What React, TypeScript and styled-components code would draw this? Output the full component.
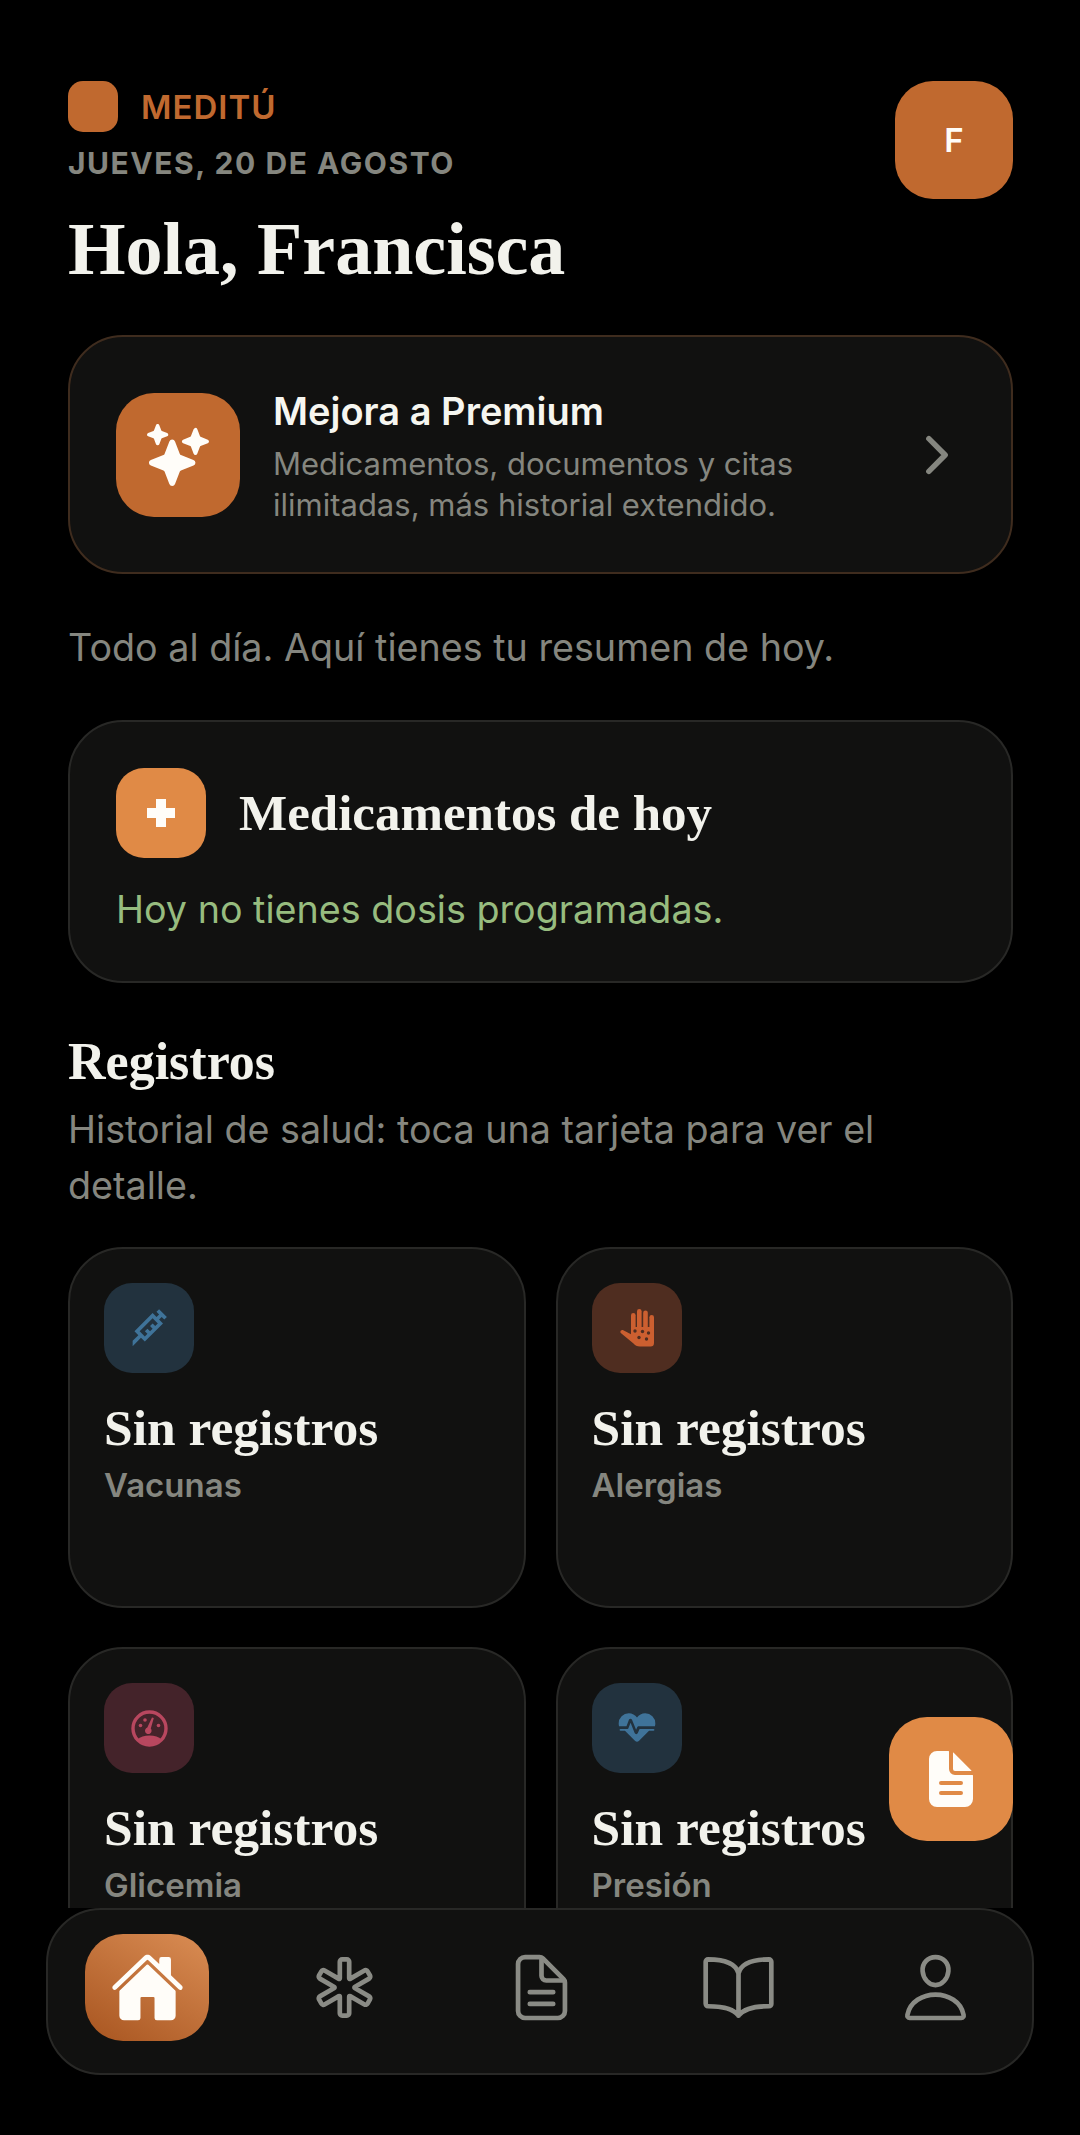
import React from 'react'
import styled, { createGlobalStyle } from 'styled-components'
import {
  IoBookOutline,
  IoChevronForward,
  IoDocumentText,
  IoDocumentTextOutline,
  IoHome,
  IoMedicalOutline,
  IoPersonOutline,
  IoSparkles,
} from 'react-icons/io5'

const SANS = '"Inter", "Liberation Sans", sans-serif'
const SERIF = '"Liberation Serif", serif'

const GlobalStyle = createGlobalStyle`
  html, body {
    margin: 0;
    background: #000;
  }
  * {
    box-sizing: border-box;
  }
`

const Screen = styled.div`
  position: relative;
  width: 1080px;
  height: 2135px;
  display: flex;
  flex-direction: column;
  overflow: hidden;
  background: #000;
  font-family: ${SANS};
`

const Scroll = styled.main`
  flex: 0 0 1908px;
  height: 1908px;
  overflow: hidden;
  padding: 81px 67px 0 68px;
`

const Header = styled.header`
  display: flex;
  justify-content: space-between;
  align-items: flex-start;
  height: 254px;
`

const Brand = styled.div`
  display: flex;
  align-items: center;
  gap: 23px;
`

const Logo = styled.div`
  width: 50px;
  height: 51px;
  border-radius: 15px;
  background: #c0692f;
`

const BrandName = styled.span`
  font-size: 33px;
  font-weight: 600;
  letter-spacing: 1px;
  color: #c0692f;
`

const DateLine = styled.div`
  margin-top: 13px;
  font-size: 30px;
  line-height: 36px;
  font-weight: 700;
  letter-spacing: 1.55px;
  color: #85867f;
`

const Title = styled.h1`
  margin: 26px 0 0;
  font-family: ${SERIF};
  font-size: 74px;
  line-height: 84px;
  font-weight: 700;
  color: #f2f2ec;
`

const Avatar = styled.div`
  width: 118px;
  height: 118px;
  border-radius: 38px;
  display: flex;
  align-items: center;
  justify-content: center;
  background: #c0692f;
  color: #fffdf9;
  font-size: 33px;
  font-weight: 600;
`

const Card = styled.section`
  background: #111110;
  border: 2px solid #282826;
  border-radius: 55px;
`

const PremiumCard = styled(Card)`
  height: 239px;
  padding: 0 45px 0 46px;
  display: flex;
  align-items: center;
  border-color: #3f2c1e;
`

const PremiumIcon = styled.div`
  flex: none;
  width: 124px;
  height: 124px;
  border-radius: 38px;
  display: flex;
  align-items: center;
  justify-content: center;
  background: #c0692f;
  color: #fffdf9;
  font-size: 62px;
`

const PremiumBody = styled.div`
  flex: 1;
  margin-left: 33px;
  padding-top: 3px;
`

const PremiumTitle = styled.div`
  font-size: 38px;
  line-height: 46px;
  font-weight: 600;
  color: #f6f6f0;
`

const PremiumText = styled.div`
  margin-top: 9px;
  font-size: 31px;
  line-height: 41px;
  color: #85867f;
`

const Chevron = styled.div`
  display: flex;
  color: #85867f;
  font-size: 58px;
`

const Lead = styled.p`
  margin: 50px 0 0;
  font-size: 37.7px;
  line-height: 46px;
  color: #85867f;
`

const TodayCard = styled(Card)`
  height: 263px;
  margin-top: 50px;
  padding: 46px 46px 0;
`

const TodayHead = styled.div`
  display: flex;
  align-items: center;
  gap: 33px;
`

const TodayIcon = styled.div`
  width: 90px;
  height: 90px;
  border-radius: 28px;
  display: flex;
  align-items: center;
  justify-content: center;
  background: #e08a46;
  color: #fffdf9;
`

const TodayTitle = styled.h2`
  margin: 0;
  font-family: ${SERIF};
  font-size: 51px;
  line-height: 60px;
  font-weight: 700;
  color: #f2f2ec;
`

const TodayNote = styled.div`
  margin-top: 28px;
  font-size: 37.7px;
  line-height: 46px;
  color: #97bc7f;
`

const SectionTitle = styled.h2`
  margin: 50px 0 0;
  font-family: ${SERIF};
  font-size: 52px;
  line-height: 58px;
  font-weight: 700;
  color: #f2f2ec;
`

const SectionText = styled.p`
  max-width: 880px;
  margin: 10px 0 0;
  font-size: 37.7px;
  line-height: 56px;
  color: #85867f;
`

const Grid = styled.div`
  display: grid;
  grid-template-columns: repeat(2, 1fr);
  gap: 39px 30px;
  margin-top: 34px;
`

const RecordCard = styled(Card)`
  height: 361px;
  padding: 34px 34px 0;
`

const RecordIcon = styled.div<{ $bg: string; $fg: string }>`
  width: 90px;
  height: 90px;
  border-radius: 28px;
  display: flex;
  align-items: center;
  justify-content: center;
  background: ${props => props.$bg};
  color: ${props => props.$fg};
`

const RecordValue = styled.div`
  margin-top: 25px;
  font-family: ${SERIF};
  font-size: 51.5px;
  line-height: 60px;
  font-weight: 700;
  color: #f2f2ec;
`

const RecordLabel = styled.div`
  margin-top: 7px;
  font-size: 33px;
  line-height: 40px;
  font-weight: 600;
  color: #85867f;
`

const Fab = styled.button`
  position: absolute;
  left: 889px;
  top: 1717px;
  width: 124px;
  height: 124px;
  padding: 0;
  border: 0;
  border-radius: 38px;
  display: flex;
  align-items: center;
  justify-content: center;
  background: #e08a46;
  color: #fffdf9;
  font-size: 64px;
`

const Footer = styled.div`
  padding: 0 46px;
`

const Nav = styled.nav`
  height: 167px;
  padding: 0 0 8px 37px;
  display: flex;
  align-items: center;
  gap: 73px;
  background: #111110;
  border: 2px solid #282826;
  border-radius: 55px;
`

const NavItem = styled.div<{ $active?: boolean }>`
  width: 124px;
  height: 107px;
  border-radius: 38px;
  display: flex;
  align-items: center;
  justify-content: center;
  font-size: 75px;
  color: ${props => (props.$active ? '#fffdf9' : '#8a8b85')};
  background: ${props => (props.$active ? 'linear-gradient(30deg, #a85520, #da8d54)' : 'transparent')};
`

const CrossIcon = () => (
  <svg width="34" height="34" viewBox="0 0 34 34" fill="currentColor">
    <path d="M12 3h10v9h9v10h-9v9H12v-9H3V12h9z" />
  </svg>
)

const NeedleIcon = () => (
  <svg width="44" height="44" viewBox="0 0 24 24" fill="currentColor">
    <path d="M11.15,15.18L9.73,13.77L11.15,12.35L12.56,13.77L13.97,12.35L12.56,10.94L13.97,9.53L15.39,10.94L16.8,9.53L13.97,6.7L6.9,13.77L9.73,16.6L11.15,15.18M3.08,19L6.2,15.89L4.08,13.77L13.97,3.87L16.1,6L17.5,4.58L16.08,3.16L17.5,1.75L21.75,6L20.34,7.4L18.92,6L17.5,7.4L19.63,9.53L9.73,19.42L7.61,17.3L3.08,22V19Z" />
  </svg>
)

const HandIcon = () => (
  <svg width="34" height="38" viewBox="0 0 34 38" fill="currentColor">
    <rect x="11" y="4" width="4.600" height="20" rx="2.300" />
    <rect x="17" y="0" width="4.600" height="24" rx="2.300" />
    <rect x="23.200" y="1.500" width="4.600" height="22" rx="2.300" />
    <rect x="29.400" y="6" width="4.600" height="20" rx="2.300" />
    <path d="M11 18h23v16a3.500 3.500 0 0 1-3.500 3.500H20c-3 0-5-1-6.500-3L.8 24c-1.200-1.500.5-3.500 2.500-2.700l7.700 4z" />
    <g fill="#4f2d20">
      <circle cx="15" cy="22" r="1.700" />
      <circle cx="22.500" cy="22.500" r="1.700" />
      <circle cx="28.500" cy="24" r="1.700" />
      <circle cx="19" cy="28.500" r="1.700" />
      <circle cx="26.500" cy="30" r="1.700" />
    </g>
  </svg>
)

const GaugeIcon = () => (
  <svg width="37" height="37" viewBox="0 0 37 37" fill="currentColor">
    <circle cx="18.500" cy="18.500" r="16.500" fill="none" stroke="currentColor" strokeWidth="3.400" />
    <circle cx="9.500" cy="15.500" r="1.800" />
    <circle cx="14" cy="10" r="1.800" />
    <circle cx="27.500" cy="15.500" r="1.800" />
    <path d="M21 7.500l1.800.6-3 10.500a3.300 3.300 0 1 1-3.500-1z" />
    <path d="M6.500 29.500C9 26.800 13.500 25.500 18.500 25.500s9.500 1.300 12 4C27.500 33 23 35 18.500 35S9.500 33 6.500 29.500z" />
  </svg>
)

const PulseIcon = () => (
  <svg width="44" height="44" viewBox="0 0 24 24" fill="currentColor">
    <path d="M7.5,4A5.5,5.5 0 0,0 2,9.500C2,10 2.090,10.500 2.220,11H6.270L7.540,7.630C7.840,6.820 9,6.790 9.330,7.590L11.500,13L12.090,11.580C12.220,11.250 12.570,11 13,11H21.780C21.910,10.500 22,10 22,9.500A5.500,5.500 0 0,0 16.500,4C14.640,4 13,4.930 12,6.340C11,4.930 9.360,4 7.500,4V4M3,12.500A0.500,0.500 0 0,0 2.500,13A0.500,0.500 0 0,0 3,13.500H5.440L11,19.060C11.550,19.620 12.450,19.620 13,19.060L18.560,13.500H21A0.500,0.500 0 0,0 21.500,13A0.500,0.500 0 0,0 21,12.500H13.400L12.470,14.760C12.160,15.550 11.040,15.560 10.720,14.780L8.500,9.200L7.310,12.180C7.230,12.370 7.050,12.500 6.850,12.500H3Z" />
  </svg>
)

const records = [
  { label: 'Vacunas', bg: '#22323e', fg: '#3f7399', icon: <NeedleIcon /> },
  { label: 'Alergias', bg: '#4f2d20', fg: '#cc5f30', icon: <HandIcon /> },
  { label: 'Glicemia', bg: '#44232a', fg: '#b8475f', icon: <GaugeIcon /> },
  { label: 'Presión', bg: '#22323e', fg: '#3f7399', icon: <PulseIcon /> },
]

export default function App() {
  return (
    <Screen>
      <GlobalStyle />
      <Scroll>
        <Header>
          <div>
            <Brand>
              <Logo />
              <BrandName>MEDITÚ</BrandName>
            </Brand>
            <DateLine>JUEVES, 20 DE AGOSTO</DateLine>
            <Title>Hola, Francisca</Title>
          </div>
          <Avatar>F</Avatar>
        </Header>

        <PremiumCard>
          <PremiumIcon>
            <IoSparkles />
          </PremiumIcon>
          <PremiumBody>
            <PremiumTitle>Mejora a Premium</PremiumTitle>
            <PremiumText>
              Medicamentos, documentos y citas
              <br />
              ilimitadas, más historial extendido.
            </PremiumText>
          </PremiumBody>
          <Chevron>
            <IoChevronForward />
          </Chevron>
        </PremiumCard>

        <Lead>Todo al día. Aquí tienes tu resumen de hoy.</Lead>

        <TodayCard>
          <TodayHead>
            <TodayIcon>
              <CrossIcon />
            </TodayIcon>
            <TodayTitle>Medicamentos de hoy</TodayTitle>
          </TodayHead>
          <TodayNote>Hoy no tienes dosis programadas.</TodayNote>
        </TodayCard>

        <SectionTitle>Registros</SectionTitle>
        <SectionText>Historial de salud: toca una tarjeta para ver el detalle.</SectionText>

        <Grid>
          {records.map(record => (
            <RecordCard key={record.label}>
              <RecordIcon $bg={record.bg} $fg={record.fg}>
                {record.icon}
              </RecordIcon>
              <RecordValue>Sin registros</RecordValue>
              <RecordLabel>{record.label}</RecordLabel>
            </RecordCard>
          ))}
        </Grid>
      </Scroll>

      <Fab aria-label="Documentos">
        <IoDocumentText />
      </Fab>

      <Footer>
        <Nav>
          <NavItem $active>
            <IoHome />
          </NavItem>
          <NavItem>
            <IoMedicalOutline />
          </NavItem>
          <NavItem>
            <IoDocumentTextOutline />
          </NavItem>
          <NavItem>
            <IoBookOutline />
          </NavItem>
          <NavItem>
            <IoPersonOutline />
          </NavItem>
        </Nav>
      </Footer>
    </Screen>
  )
}
